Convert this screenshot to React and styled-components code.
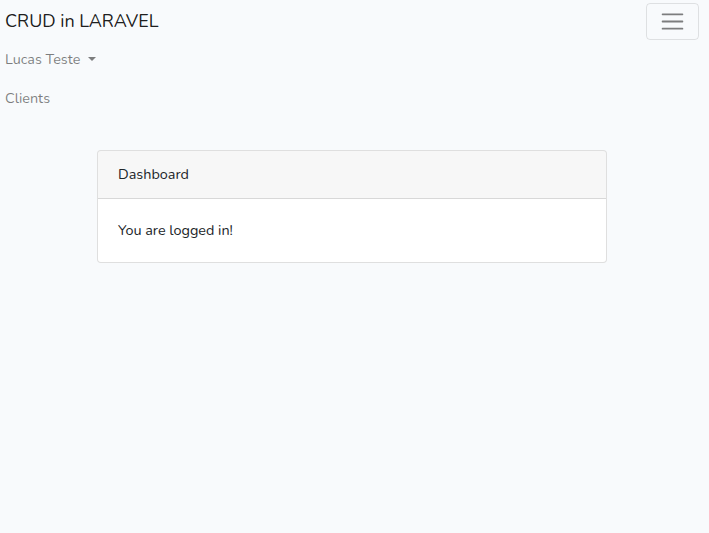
import React from "react";
import styled, { createGlobalStyle } from "styled-components";

const Global = createGlobalStyle`
  *, *::before, *::after { box-sizing: border-box; }
  html, body { margin: 0; padding: 0; }
  body {
    background: #f8fafc;
    font-family: "Nunito", "Lato", "Noto Sans", sans-serif;
    font-size: 14.4px;
    line-height: 1.6;
    color: #212529;
  }
`;

const Navbar = styled.nav`
  display: flex;
  flex-wrap: wrap;
  align-items: center;
  justify-content: space-between;
  padding: 3px 10px 0 5px;
`;

const Brand = styled.a`
  font-size: 18px;
  line-height: 1.6;
  color: rgba(0, 0, 0, 0.9);
  text-decoration: none;
`;

const Toggler = styled.button`
  width: 53px;
  height: 37px;
  padding: 4px 12px;
  background: transparent;
  border: 1px solid rgba(0, 0, 0, 0.1);
  border-radius: 4px;
  display: flex;
  align-items: center;
  justify-content: center;
`;

const Collapse = styled.ul`
  flex-basis: 100%;
  list-style: none;
  margin: 0;
  padding: 0;
  display: flex;
  flex-direction: column;
`;

const NavLink = styled.a`
  display: block;
  padding: 8px 0;
  color: rgba(0, 0, 0, 0.5);
  text-decoration: none;
`;

const Caret = styled.span`
  display: inline-block;
  margin-left: 8px;
  vertical-align: 3px;
  border-top: 4.3px solid rgba(0, 0, 0, 0.5);
  border-left: 4.3px solid transparent;
  border-right: 4.3px solid transparent;
`;

const Main = styled.main`
  padding: 32px 0 0 97px;
`;

const Card = styled.div`
  width: 510px;
  background: #fff;
  border: 1px solid rgba(0, 0, 0, 0.125);
  border-radius: 4px;
  overflow: hidden;
`;

const CardHeader = styled.div`
  padding: 12px 20px;
  background: rgba(0, 0, 0, 0.03);
  border-bottom: 1px solid rgba(0, 0, 0, 0.125);
`;

const CardBody = styled.div`
  padding: 20px;
`;

export default function App() {
  return (
    <>
      <Global />
      <Navbar>
        <Brand href="#">CRUD in LARAVEL</Brand>
        <Toggler aria-label="Toggle navigation">
          <svg width="27" height="27" viewBox="0 0 30 30">
            <path
              d="M4 7h22M4 15h22M4 23h22"
              stroke="rgba(0,0,0,0.5)"
              strokeWidth="2"
              strokeLinecap="round"
              strokeMiterlimit="10"
            />
          </svg>
        </Toggler>
        <Collapse>
          <li>
            <NavLink href="#">
              Lucas Teste<Caret />
            </NavLink>
          </li>
          <li>
            <NavLink href="#">Clients</NavLink>
          </li>
        </Collapse>
      </Navbar>
      <Main>
        <Card>
          <CardHeader>Dashboard</CardHeader>
          <CardBody>You are logged in!</CardBody>
        </Card>
      </Main>
    </>
  );
}
